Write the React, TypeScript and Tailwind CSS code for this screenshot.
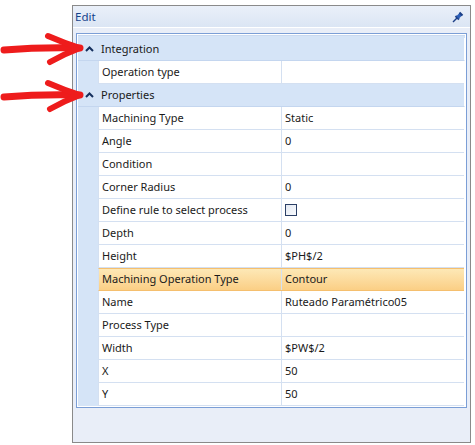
import React from 'react';

type Row =
  | { kind: 'group'; label: string }
  | { kind: 'prop'; name: string; value?: string; checkbox?: boolean; selected?: boolean };

const rows: Row[] = [
  { kind: 'group', label: 'Integration' },
  { kind: 'prop', name: 'Operation type' },
  { kind: 'group', label: 'Properties' },
  { kind: 'prop', name: 'Machining Type', value: 'Static' },
  { kind: 'prop', name: 'Angle', value: '0' },
  { kind: 'prop', name: 'Condition' },
  { kind: 'prop', name: 'Corner Radius', value: '0' },
  { kind: 'prop', name: 'Define rule to select process', checkbox: true },
  { kind: 'prop', name: 'Depth', value: '0' },
  { kind: 'prop', name: 'Height', value: '$PH$/2' },
  { kind: 'prop', name: 'Machining Operation Type', value: 'Contour', selected: true },
  { kind: 'prop', name: 'Name', value: 'Ruteado Paramétrico05' },
  { kind: 'prop', name: 'Process Type' },
  { kind: 'prop', name: 'Width', value: '$PW$/2' },
  { kind: 'prop', name: 'X', value: '50' },
  { kind: 'prop', name: 'Y', value: '50' },
];

function Chevron() {
  return (
    <svg width="9" height="6" viewBox="0 0 9 6">
      <polyline points="1,5 4.5,1.5 8,5" fill="none" stroke="#15305e" strokeWidth="2" />
    </svg>
  );
}

function Pin() {
  return (
    <svg width="12" height="12" viewBox="0 0 12 12">
      <path d="M1 11 L5 7" stroke="#1c3f86" strokeWidth="1.5" />
      <path d="M3.5 5 L7 8.5" stroke="#1c3f86" strokeWidth="2" />
      <path d="M5.5 6.5 L9 3" stroke="#2d5fb8" strokeWidth="3.5" />
      <path d="M7.5 1.5 L10.5 4.5" stroke="#1c3f86" strokeWidth="2" />
    </svg>
  );
}

// red annotation arrows drawn over the left margin
function Arrows() {
  return (
    <svg className="absolute left-0 top-0" width="90" height="120" viewBox="0 0 90 120">
      <g fill="none" stroke="#ee1c1c" strokeLinecap="round" strokeLinejoin="round">
        <path d="M4 50 Q40 47 80 48" strokeWidth="7" />
        <path d="M48 36 Q64 43 80 48 Q64 54 50 62" strokeWidth="6" />
        <path d="M4 97 Q40 94 80 95" strokeWidth="7" />
        <path d="M48 83 Q64 90 80 95 Q64 101 50 109" strokeWidth="6" />
      </g>
    </svg>
  );
}

export default function App() {
  return (
    <div
      className="relative w-[475px] h-[445px] bg-white pl-[72px] pt-[5px]"
      style={{ fontFamily: '"Noto Sans", "Open Sans", sans-serif' }}
    >
      <div className="w-[399px] h-[438px] border border-[#8a8a8a] bg-[#e9eef8] flex flex-col">
        {/* header */}
        <div className="h-[22px] flex items-center justify-between pl-[2px] pr-[6px] bg-gradient-to-b from-[#eaf0f9] to-[#dbe5f4] border-b border-white">
          <span className="text-[11.5px] text-[#15428b] leading-none">Edit</span>
          <Pin />
        </div>

        {/* grid */}
        <div className="mt-[5px] ml-[3px] w-[391px] border border-[#7b9ed6] bg-white p-px">
          <div className="border-t border-[#c9d9f0] pt-[2px] bg-[#d5e4f7]">
            {rows.map((row, i) =>
              row.kind === 'group' ? (
                <div
                  key={i}
                  className="h-[23px] flex items-center bg-[#d5e4f7] border-b border-[#c4d6ef] border-r border-r-white"
                >
                  <div className="w-[21px] flex justify-center pl-[2px]">
                    <Chevron />
                  </div>
                  <span className="pl-[2px] text-[11px] text-[#1a1a1a]">{row.label}</span>
                </div>
              ) : (
                <div key={i} className="h-[23px] flex bg-[#d5e4f7] border-r border-r-white">
                  <div className="w-[20px] shrink-0" />
                  <div
                    className={`flex flex-1 border-l border-[#d4e0f1] ${
                      row.selected
                        ? 'bg-gradient-to-b from-[#fde8b6] to-[#fbcf85] border-y border-y-[#f5bf6e]'
                        : 'bg-white border-b border-b-[#d4e0f1]'
                    }`}
                  >
                    <div className="w-[183px] shrink-0 flex items-center pl-[3px] border-r border-[#d4e0f1] text-[11px] text-[#1a1a1a]">
                      {row.name}
                    </div>
                    <div className="flex-1 flex items-center pl-[3px] text-[11px] text-[#1a1a1a]">
                      {row.checkbox ? (
                        <span className="w-[12px] h-[12px] border border-[#2b3f66] bg-gradient-to-br from-[#e4e9f2] to-[#f8fafd]" />
                      ) : (
                        row.value
                      )}
                    </div>
                  </div>
                </div>
              )
            )}
          </div>
        </div>
      </div>
      <Arrows />
    </div>
  );
}
